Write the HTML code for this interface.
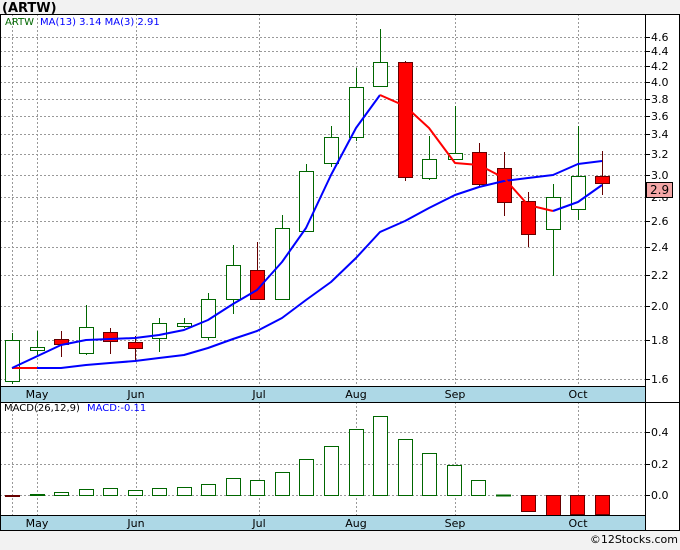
<!DOCTYPE html><html><head><style>body{margin:0;background:#f2f2f2;width:680px;height:546px;overflow:hidden;font-family:"DejaVu Sans","Liberation Sans",sans-serif}</style></head><body>
<svg width="680" height="546" xmlns="http://www.w3.org/2000/svg" font-family="DejaVu Sans, Liberation Sans, sans-serif">
<rect x="0" y="0" width="680" height="546" fill="#f2f2f2"/>
<text x="2" y="12" font-size="13" font-weight="bold" fill="#000">(ARTW)</text>
<rect x="0" y="14" width="680" height="516" fill="#fff"/>
<rect x="0" y="386" width="645" height="16" fill="#add8e6"/>
<rect x="0" y="515" width="645" height="15" fill="#add8e6"/>
<g stroke="#999" stroke-dasharray="2,2" stroke-width="1">
<line x1="0" x2="645" y1="37.5" y2="37.5"/><line x1="0" x2="645" y1="51.5" y2="51.5"/><line x1="0" x2="645" y1="66.5" y2="66.5"/><line x1="0" x2="645" y1="82.5" y2="82.5"/><line x1="0" x2="645" y1="99.5" y2="99.5"/><line x1="0" x2="645" y1="116.5" y2="116.5"/><line x1="0" x2="645" y1="134.5" y2="134.5"/><line x1="0" x2="645" y1="154.5" y2="154.5"/><line x1="0" x2="645" y1="175.5" y2="175.5"/><line x1="0" x2="645" y1="197.5" y2="197.5"/><line x1="0" x2="645" y1="221.5" y2="221.5"/><line x1="0" x2="645" y1="247.5" y2="247.5"/><line x1="0" x2="645" y1="275.5" y2="275.5"/><line x1="0" x2="645" y1="306.5" y2="306.5"/><line x1="0" x2="645" y1="340.5" y2="340.5"/><line x1="0" x2="645" y1="379.5" y2="379.5"/>
<line x1="0" x2="645" y1="432.5" y2="432.5"/><line x1="0" x2="645" y1="464.5" y2="464.5"/><line x1="0" x2="645" y1="495.5" y2="495.5"/>
<line x1="12.5" x2="12.5" y1="14" y2="386"/><line x1="37.5" x2="37.5" y1="14" y2="386"/><line x1="136.5" x2="136.5" y1="14" y2="386"/><line x1="259.5" x2="259.5" y1="14" y2="386"/><line x1="356.5" x2="356.5" y1="14" y2="386"/><line x1="455.5" x2="455.5" y1="14" y2="386"/><line x1="578.5" x2="578.5" y1="14" y2="386"/>
<line x1="12.5" x2="12.5" y1="402" y2="515"/><line x1="37.5" x2="37.5" y1="402" y2="515"/><line x1="136.5" x2="136.5" y1="402" y2="515"/><line x1="259.5" x2="259.5" y1="402" y2="515"/><line x1="356.5" x2="356.5" y1="402" y2="515"/><line x1="455.5" x2="455.5" y1="402" y2="515"/><line x1="578.5" x2="578.5" y1="402" y2="515"/>
</g>
<g font-size="11" fill="#000" text-anchor="middle">
<text x="37" y="398">May</text><text x="136" y="398">Jun</text><text x="259" y="398">Jul</text><text x="356" y="398">Aug</text><text x="455" y="398">Sep</text><text x="578" y="398">Oct</text>
<text x="37" y="527">May</text><text x="136" y="527">Jun</text><text x="259" y="527">Jul</text><text x="356" y="527">Aug</text><text x="455" y="527">Sep</text><text x="578" y="527">Oct</text>
</g>
<!-- candles -->
<g stroke-width="1">
<g stroke="#060"><line x1="12.5" x2="12.5" y1="333" y2="384"/><rect x="5.5" y="340.5" width="14" height="41" fill="#fff"/>
<line x1="37.5" x2="37.5" y1="331" y2="355"/><rect x="30.5" y="347.5" width="14" height="3" fill="#fff"/>
<line x1="86.5" x2="86.5" y1="305" y2="355"/><rect x="79.5" y="327.5" width="14" height="26" fill="#fff"/>
<line x1="159.5" x2="159.5" y1="318" y2="352"/><rect x="152.5" y="323.5" width="14" height="15" fill="#fff"/>
<line x1="184.5" x2="184.5" y1="318" y2="328"/><rect x="177.5" y="323.5" width="14" height="3" fill="#fff"/>
<line x1="208.5" x2="208.5" y1="293" y2="340"/><rect x="201.5" y="299.5" width="14" height="38" fill="#fff"/>
<line x1="233.5" x2="233.5" y1="245" y2="314"/><rect x="226.5" y="265.5" width="14" height="34" fill="#fff"/>
<line x1="282.5" x2="282.5" y1="215" y2="300"/><rect x="275.5" y="228.5" width="14" height="71" fill="#fff"/>
<line x1="306.5" x2="306.5" y1="164" y2="232"/><rect x="299.5" y="171.5" width="14" height="60" fill="#fff"/>
<line x1="331.5" x2="331.5" y1="126" y2="167"/><rect x="324.5" y="137.5" width="14" height="26" fill="#fff"/>
<line x1="356.5" x2="356.5" y1="68" y2="141"/><rect x="349.5" y="87.5" width="14" height="50" fill="#fff"/>
<line x1="380.5" x2="380.5" y1="29" y2="86"/><rect x="373.5" y="62.5" width="14" height="24" fill="#fff"/>
<line x1="429.5" x2="429.5" y1="136" y2="180"/><rect x="422.5" y="159.5" width="14" height="19" fill="#fff"/>
<line x1="455.5" x2="455.5" y1="106" y2="160"/><rect x="448.5" y="153.5" width="14" height="6" fill="#fff"/>
<line x1="553.5" x2="553.5" y1="184" y2="276"/><rect x="546.5" y="197.5" width="14" height="32" fill="#fff"/>
<line x1="578.5" x2="578.5" y1="126" y2="220"/><rect x="571.5" y="176.5" width="14" height="33" fill="#fff"/>
</g>
<g stroke="#600" fill="#f00">
<line x1="61.5" x2="61.5" y1="331" y2="357"/><rect x="54.5" y="339.5" width="14" height="5"/>
<line x1="110.5" x2="110.5" y1="328" y2="354"/><rect x="103.5" y="332.5" width="14" height="9"/>
<line x1="135.5" x2="135.5" y1="336" y2="360"/><rect x="128.5" y="342.5" width="14" height="6"/>
<line x1="257.5" x2="257.5" y1="242" y2="300"/><rect x="250.5" y="270.5" width="14" height="29"/>
<line x1="405.5" x2="405.5" y1="61" y2="181"/><rect x="398.5" y="62.5" width="14" height="115"/>
<line x1="479.5" x2="479.5" y1="143" y2="186"/><rect x="472.5" y="152.5" width="14" height="32"/>
<line x1="504.5" x2="504.5" y1="152" y2="216"/><rect x="497.5" y="168.5" width="14" height="34"/>
<line x1="528.5" x2="528.5" y1="192" y2="247"/><rect x="521.5" y="201.5" width="14" height="33"/>
<line x1="602.5" x2="602.5" y1="151" y2="195"/><rect x="595.5" y="176.5" width="14" height="7"/>
</g></g>
<g fill="none" stroke-width="2" stroke-linejoin="round">
<polyline stroke="#00f" points="37,368 61,368 86,365 110,363 135,361 159,358 184,355 208,348 233,339 257,331 282,318 306,300 331,282 356,258 380,232 405,221 429,208 455,195 479,187 504,181 528,178 553,175 578,164 602,161"/>
<polyline stroke="#f00" points="12,368 37,368"/>
<polyline stroke="#00f" points="12,368 61,345 86,340 110,339 135,338 159,335 184,330 208,320 233,304 257,290 282,262 306,228 331,175 356,128 380,95"/>
<polyline stroke="#f00" points="380,95 405,106 429,128 455,163 479,165 504,178 528,205 553,211"/>
<polyline stroke="#00f" points="553,211 578,202 602,185"/>
</g>
<!-- MACD -->
<g stroke="#060" fill="#fff">
<rect x="30.5" y="494.5" width="14" height="1"/><rect x="54.5" y="492.5" width="14" height="3"/><rect x="79.5" y="489.5" width="14" height="6"/><rect x="103.5" y="488.5" width="14" height="7"/><rect x="128.5" y="490.5" width="14" height="5"/><rect x="152.5" y="488.5" width="14" height="7"/><rect x="177.5" y="487.5" width="14" height="8"/><rect x="201.5" y="484.5" width="14" height="11"/><rect x="226.5" y="478.5" width="14" height="17"/><rect x="250.5" y="480.5" width="14" height="15"/><rect x="275.5" y="472.5" width="14" height="23"/><rect x="299.5" y="459.5" width="14" height="36"/><rect x="324.5" y="446.5" width="14" height="49"/><rect x="349.5" y="429.5" width="14" height="66"/><rect x="373.5" y="416.5" width="14" height="79"/><rect x="398.5" y="439.5" width="14" height="56"/><rect x="422.5" y="453.5" width="14" height="42"/><rect x="447.5" y="465.5" width="14" height="30"/><rect x="471.5" y="480.5" width="14" height="15"/><rect x="496.5" y="495" width="14" height="1"/>
</g>
<g stroke="#600" fill="#f00">
<rect x="5.5" y="495.5" width="14" height="1"/>
<rect x="521.5" y="495.5" width="14" height="16"/><rect x="546.5" y="495.5" width="14" height="20"/><rect x="570.5" y="495.5" width="14" height="19"/><rect x="595.5" y="495.5" width="14" height="19"/>
</g>
<!-- frame -->
<g stroke="#000" stroke-width="1" fill="none">
<line x1="0" x2="680" y1="14.5" y2="14.5"/><line x1="0.5" x2="0.5" y1="14" y2="530"/>
<line x1="0" x2="645" y1="386.5" y2="386.5"/><line x1="0" x2="680" y1="402.5" y2="402.5"/>
<line x1="0" x2="645" y1="515.5" y2="515.5"/><line x1="0" x2="680" y1="530.5" y2="530.5"/>
<line x1="645.5" x2="645.5" y1="14" y2="530"/><line x1="679.5" x2="679.5" y1="14" y2="530"/>
</g>
<g stroke="#000"><line x1="645" x2="650" y1="37.5" y2="37.5"/><line x1="645" x2="650" y1="51.5" y2="51.5"/><line x1="645" x2="650" y1="66.5" y2="66.5"/><line x1="645" x2="650" y1="82.5" y2="82.5"/><line x1="645" x2="650" y1="99.5" y2="99.5"/><line x1="645" x2="650" y1="116.5" y2="116.5"/><line x1="645" x2="650" y1="134.5" y2="134.5"/><line x1="645" x2="650" y1="154.5" y2="154.5"/><line x1="645" x2="650" y1="175.5" y2="175.5"/><line x1="645" x2="650" y1="197.5" y2="197.5"/><line x1="645" x2="650" y1="221.5" y2="221.5"/><line x1="645" x2="650" y1="247.5" y2="247.5"/><line x1="645" x2="650" y1="275.5" y2="275.5"/><line x1="645" x2="650" y1="306.5" y2="306.5"/><line x1="645" x2="650" y1="340.5" y2="340.5"/><line x1="645" x2="650" y1="379.5" y2="379.5"/><line x1="645" x2="650" y1="432.5" y2="432.5"/><line x1="645" x2="650" y1="464.5" y2="464.5"/><line x1="645" x2="650" y1="495.5" y2="495.5"/></g>
<g font-size="11" fill="#000">
<text x="651" y="41">4.6</text><text x="651" y="55">4.4</text><text x="651" y="70">4.2</text><text x="651" y="86">4.0</text><text x="651" y="103">3.8</text><text x="651" y="120">3.6</text><text x="651" y="138">3.4</text><text x="651" y="158">3.2</text><text x="651" y="179">3.0</text><text x="651" y="201">2.8</text><text x="651" y="225">2.6</text><text x="651" y="251">2.4</text><text x="651" y="279">2.2</text><text x="651" y="310">2.0</text><text x="651" y="344">1.8</text><text x="651" y="383">1.6</text>
<text x="651" y="436">0.4</text><text x="651" y="468">0.2</text><text x="651" y="499">0.0</text>
</g>
<rect x="646.5" y="182.5" width="26" height="15" fill="#f4a6a6" stroke="#000"/>
<text x="650" y="194" font-size="12" fill="#000">2.9</text>
<text x="5" y="25" font-size="10" fill="#060">ARTW</text>
<text x="40" y="25" font-size="10" fill="#00f">MA(13)  3.14  MA(3)  2.91</text>
<text x="4" y="411" font-size="10" fill="#000">MACD(26,12,9)</text>
<text x="87" y="411" font-size="10" fill="#00f">MACD:-0.11</text>
<text x="678" y="543" font-size="11" fill="#000" text-anchor="end">©12Stocks.com</text>
</svg></body></html>
